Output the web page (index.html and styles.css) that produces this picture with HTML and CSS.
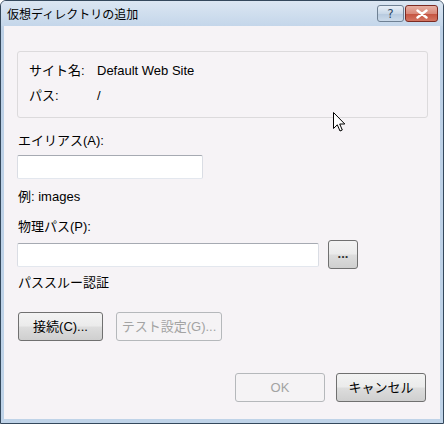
FILE: index.html
```html
<!DOCTYPE html>
<html lang="ja">
<head>
<meta charset="utf-8">
<link rel="stylesheet" href="styles.css">
</head>
<body>
<div class="window">
  <div class="titlebar">
    <span class="title">仮想ディレクトリの追加</span>
    <div class="caption-buttons">
      <span class="cbtn help">?</span>
      <span class="cbtn close">
        <svg width="14" height="10" viewBox="0 0 14 10"><path d="M2.5 1.5 L11.5 8.5 M11.5 1.5 L2.5 8.5" stroke="#fff" stroke-width="2.4" stroke-linecap="round"/></svg>
      </span>
    </div>
  </div>
  <div class="client">
    <div class="group">
      <div class="info-row"><span class="info-label">サイト名:</span><span>Default Web Site</span></div>
      <div class="info-row"><span class="info-label">パス:</span><span>/</span></div>
    </div>
    <div class="label first">エイリアス(A):</div>
    <div class="textbox alias"></div>
    <div class="label example">例: images</div>
    <div class="label phys">物理パス(P):</div>
    <div class="path-row">
      <div class="textbox path"></div>
      <span class="btn browse">...</span>
    </div>
    <div class="label pass">パススルー認証</div>
    <div class="btn-row">
      <span class="btn connect">接続(C)...</span>
      <span class="btn disabled test">テスト設定(G)...</span>
    </div>
    <div class="footer">
      <span class="btn disabled wide">OK</span>
      <span class="btn wide">キャンセル</span>
    </div>
  </div>
  <svg class="cursor" width="13" height="21" viewBox="0 0 13 21"><path d="M0.5 0.5 L0.5 16.5 L4.3 12.8 L7 19 L9.3 18 L6.7 12 L11.8 12 Z" fill="#fff" stroke="#000" stroke-width="1" stroke-linejoin="miter"/></svg>
</div>
</body>
</html>
```
FILE: styles.css
```css
html, body {
  margin: 0;
  padding: 0;
  background: #ffffff;
}
body {
  font-family: "Liberation Sans", "Noto Sans CJK JP", sans-serif;
  font-size: 13px;
  color: #000;
}
.window {
  position: relative;
  width: 444px;
  height: 424px;
  box-sizing: border-box;
  border: 1px solid #34485c;
  border-radius: 6px 6px 0 0;
  background: linear-gradient(#d6e3f1, #bcd0e6 30px, #bfd3e8);
  display: flex;
  flex-direction: column;
  overflow: hidden;
}
.titlebar {
  height: 25px;
  flex: none;
  display: flex;
  align-items: center;
  justify-content: space-between;
  padding: 0 5px 0 6px;
  background: linear-gradient(#dbe6f2, #c4d6ea);
}
.title {
  font-family: "Noto Sans CJK JP", sans-serif;
  font-size: 12px;
  line-height: 16px;
  color: #000;
}
.caption-buttons {
  display: flex;
  gap: 1px;
  align-self: flex-start;
  margin-top: 4px;
}
.cbtn {
  height: 17px;
  box-sizing: border-box;
  border: 1px solid #6f8194;
  border-radius: 3px;
  display: flex;
  align-items: center;
  justify-content: center;
}
.help {
  width: 27px;
  background: linear-gradient(#e8eff7, #c9d8e8 50%, #b6c9de 51%, #cbdaea);
  font-family: "DejaVu Sans", sans-serif;
  font-size: 12px;
  color: #2c4866;
  line-height: 14px;
}
.close {
  width: 33px;
  border-color: #7b2a22;
  background: linear-gradient(#e6b0a3, #d9897a 50%, #c4523f 51%, #d47562);
}
.client {
  flex: 1;
  margin: 0 3px 4px 3px;
  background: #f6f3f6;
  padding: 25px 14px 0 13px;
  display: flex;
  flex-direction: column;
  align-items: flex-start;
}
.group {
  width: 411px;
  box-sizing: border-box;
  border: 1px solid #dcdadc;
  border-radius: 3px;
  padding: 9px 11px 11px 11px;
  display: flex;
  flex-direction: column;
  gap: 5px;
}
.info-row {
  display: flex;
  line-height: 20px;
  height: 20px;
}
.info-label {
  width: 68px;
  flex: none;
}
.label {
  line-height: 20px;
  height: 20px;
  margin-left: 1px;
}
.label.first { margin-top: 13px; }
.label.example { margin-top: 8px; }
.label.phys { margin-top: 10px; }
.label.pass { margin-top: 4px; }
.textbox {
  height: 24px;
  box-sizing: border-box;
  background: #fff;
  border: 1px solid;
  border-color: #a6aab2 #dadde4 #e3e7ee #dadde4;
  border-radius: 2px;
}
.alias {
  width: 186px;
  margin-top: 4px;
}
.path-row {
  display: flex;
  align-items: center;
  gap: 9px;
  margin-top: 3px;
}
.path {
  width: 302px;
}
.btn {
  height: 29px;
  box-sizing: border-box;
  border: 1px solid #707070;
  border-radius: 3px;
  background: linear-gradient(#f3f3f3, #ebebeb 48%, #dddddd 52%, #cfcfcf);
  display: flex;
  align-items: center;
  justify-content: center;
  line-height: 16px;
  color: #000;
}
.btn.disabled {
  border-color: #b5b8bb;
  background: #f5f3f5;
  color: #a3a3a3;
}
.browse {
  width: 30px;
  font-weight: bold;
  padding-bottom: 2px;
  color: #333;
}
.btn-row {
  display: flex;
  gap: 13px;
  margin-top: 19px;
  margin-left: 1px;
}
.connect { width: 85px; }
.test { width: 106px; }
.footer {
  align-self: flex-end;
  display: flex;
  gap: 11px;
  margin-top: 32px;
}
.wide { width: 90px; }
.cursor {
  position: absolute;
  left: 332px;
  top: 111px;
}
```
